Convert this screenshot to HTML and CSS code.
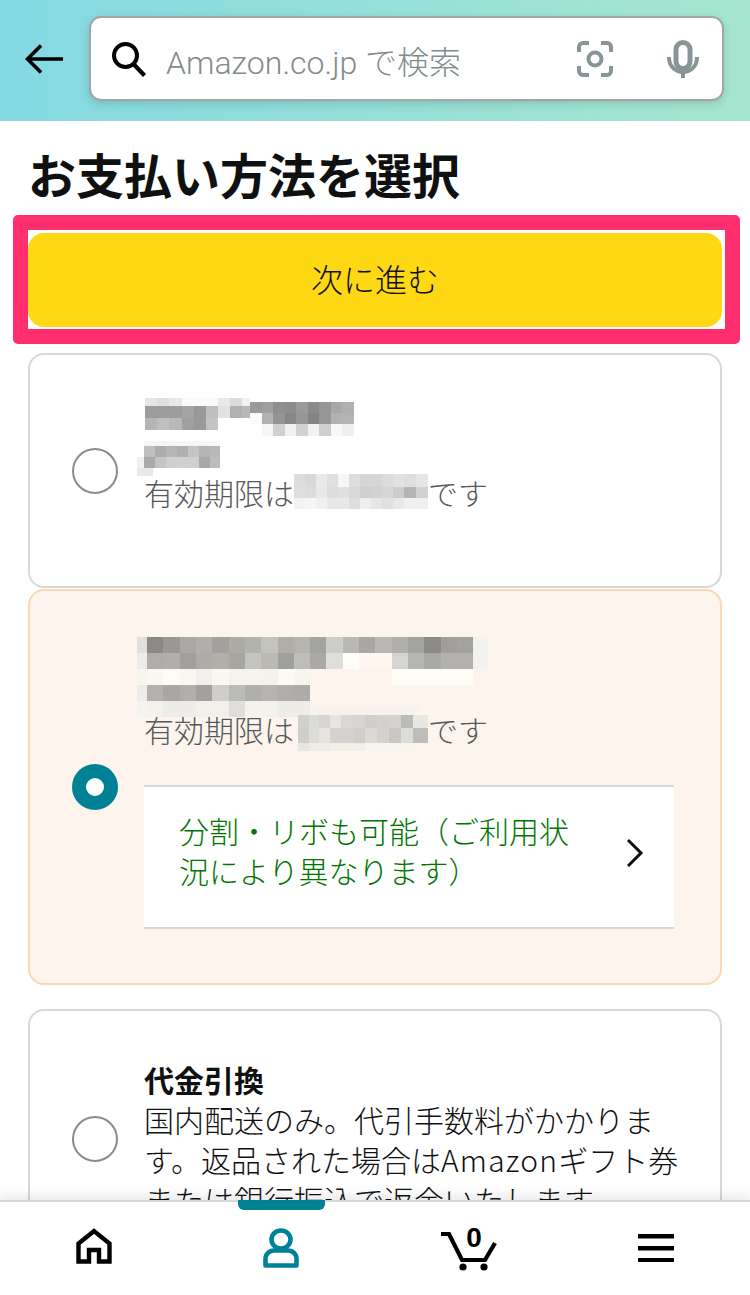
FILE: index.html
```html
<!DOCTYPE html>
<html lang="ja">
<head>
<meta charset="UTF-8">
<meta name="viewport" content="width=device-width, initial-scale=1.0">
<title>お支払い方法を選択</title>
<link rel="stylesheet" href="styles.css">
</head>
<body>
  <div class="page">
    <div class="top-bar">
      <svg class="back-icon" width="38" height="30" viewBox="0 0 38 30"><path d="M38 15H3M16 1.5L2.5 15 16 28.5" fill="none" stroke="#000" stroke-width="3.6"/></svg>
      <div class="search-box">
        <svg class="search-icon" width="36" height="36" viewBox="0 0 36 36"><circle cx="14.5" cy="14.5" r="11.5" fill="none" stroke="#000" stroke-width="4"/><path d="M22.5 23l11 11.5" stroke="#000" stroke-width="4.2"/></svg>
        <span class="search-text">Amazon.co.jp で検索</span>
        <svg class="camera-icon" width="36" height="36" viewBox="0 0 36 36" fill="none" stroke="#879596" stroke-width="4"><path d="M2 11V6a4 4 0 0 1 4-4h6M24 2h6a4 4 0 0 1 4 4v5M34 25v5a4 4 0 0 1-4 4h-6M12 34H6a4 4 0 0 1-4-4v-5"/><circle cx="18" cy="18" r="6.5"/></svg>
        <svg class="mic-icon" width="32" height="38" viewBox="0 0 32 38" fill="none"><rect x="9" y="2.500" width="14" height="26" rx="7" stroke="#879596" stroke-width="5"/><path d="M2 17v1a14 14 0 0 0 28 0v-1" stroke="#879596" stroke-width="4"/><path d="M16 32v6" stroke="#879596" stroke-width="4"/></svg>
      </div>
    </div>

    <h1 class="page-title">お支払い方法を選択</h1>

    <div class="highlight-box">
      <button class="next-btn">次に進む</button>
    </div>

    <div class="card card-first">
      <span class="radio"></span>
      <div class="card-body">
        <svg class="mosaic-name" width="220" height="78" viewBox="136 398 220 78" shape-rendering="crispEdges">
          <rect x="145" y="398" width="12" height="8" fill="#e6e6e6"/><rect x="157" y="398" width="12" height="8" fill="#e0e0e0"/><rect x="169" y="398" width="13" height="8" fill="#e8e8e8"/><rect x="182" y="398" width="36" height="8" fill="#fafafa"/>
          <rect x="145" y="406" width="12" height="12" fill="#9c9c9c"/><rect x="157" y="406" width="12" height="12" fill="#9c9c9c"/><rect x="169" y="406" width="13" height="12" fill="#9c9c9c"/><rect x="182" y="406" width="12" height="12" fill="#a4a4a4"/><rect x="194" y="406" width="12" height="12" fill="#999"/><rect x="206" y="406" width="12" height="12" fill="#bfbfbf"/>
          <rect x="145" y="418" width="12" height="12" fill="#b4b4b4"/><rect x="157" y="418" width="12" height="12" fill="#c0c0c0"/><rect x="169" y="418" width="13" height="12" fill="#b8b8b8"/><rect x="182" y="418" width="12" height="12" fill="#a0a0a0"/><rect x="194" y="418" width="12" height="12" fill="#9a9a9a"/><rect x="206" y="418" width="12" height="12" fill="#c4c4c4"/>
          <rect x="218" y="398" width="12" height="8" fill="#e8e8e8"/><rect x="230" y="398" width="12" height="8" fill="#dcdcdc"/><rect x="242" y="398" width="8" height="8" fill="#f0f0f0"/>
          <rect x="218" y="406" width="12" height="12" fill="#e2e2e2"/><rect x="230" y="406" width="12" height="12" fill="#b0b0b0"/><rect x="242" y="406" width="8" height="12" fill="#b8b8b8"/>
          <rect x="250" y="402" width="12" height="11" fill="#9a9a9a"/><rect x="262" y="402" width="11" height="11" fill="#a0a0a0"/><rect x="273" y="402" width="12" height="11" fill="#8f8f8f"/><rect x="285" y="402" width="11" height="11" fill="#8c8c8c"/><rect x="296" y="402" width="12" height="11" fill="#9a9a9a"/><rect x="308" y="402" width="11" height="11" fill="#8a8a8a"/><rect x="319" y="402" width="12" height="11" fill="#969696"/><rect x="331" y="402" width="11" height="11" fill="#a8a8a8"/><rect x="342" y="402" width="12" height="11" fill="#b0b0b0"/>
          <rect x="250" y="413" width="12" height="11" fill="#fafafa"/><rect x="262" y="413" width="11" height="11" fill="#b2b2b2"/><rect x="273" y="413" width="12" height="11" fill="#949494"/><rect x="285" y="413" width="11" height="11" fill="#868686"/><rect x="296" y="413" width="12" height="11" fill="#969696"/><rect x="308" y="413" width="11" height="11" fill="#848484"/><rect x="319" y="413" width="12" height="11" fill="#969696"/><rect x="331" y="413" width="11" height="11" fill="#b2b2b2"/><rect x="342" y="413" width="12" height="11" fill="#b4b4b4"/>
          <rect x="262" y="424" width="11" height="12" fill="#f6f6f6"/><rect x="273" y="424" width="12" height="12" fill="#d0d0d0"/><rect x="285" y="424" width="11" height="12" fill="#f0f0f0"/><rect x="296" y="424" width="12" height="12" fill="#d2d2d2"/><rect x="308" y="424" width="11" height="12" fill="#f2f2f2"/><rect x="319" y="424" width="12" height="12" fill="#cfcfcf"/><rect x="331" y="424" width="11" height="12" fill="#f8f8f8"/><rect x="342" y="424" width="12" height="12" fill="#efefef"/>
          <rect x="144" y="441" width="76" height="5" fill="#f6f6f6"/>
          <rect x="144" y="446" width="11" height="11" fill="#bfbfbf"/><rect x="155" y="446" width="11" height="11" fill="#adadad"/><rect x="166" y="446" width="11" height="11" fill="#b6b6b6"/><rect x="177" y="446" width="11" height="11" fill="#b0b0b0"/><rect x="188" y="446" width="11" height="11" fill="#c4c4c4"/><rect x="199" y="446" width="11" height="11" fill="#b4b4b4"/><rect x="210" y="446" width="10" height="11" fill="#b8b8b8"/>
          <rect x="137" y="457" width="7" height="11" fill="#f0f0f0"/><rect x="144" y="457" width="11" height="11" fill="#aaa"/><rect x="155" y="457" width="11" height="11" fill="#c4c4c4"/><rect x="166" y="457" width="11" height="11" fill="#cfcfcf"/><rect x="177" y="457" width="11" height="11" fill="#d0d0d0"/><rect x="188" y="457" width="11" height="11" fill="#cfcfcf"/><rect x="199" y="457" width="11" height="11" fill="#a8a8a8"/><rect x="210" y="457" width="10" height="11" fill="#bdbdbd"/>
          <rect x="137" y="468" width="16" height="8" fill="#e8e8e8"/>
        </svg>
        <div class="expiry-line">
          <span>有効期限は</span>
          <svg class="mosaic-date" width="134" height="36" viewBox="294 477 134 36" shape-rendering="crispEdges">
            <rect x="294" y="477" width="11" height="13" fill="#dcdcdc"/><rect x="305" y="477" width="11" height="13" fill="#d8d8d8"/><rect x="316" y="477" width="11" height="13" fill="#eaeaea"/><rect x="327" y="477" width="11" height="13" fill="#e0e0e0"/><rect x="338" y="477" width="11" height="13" fill="#f6f6f6"/><rect x="349" y="477" width="11" height="13" fill="#dedede"/><rect x="360" y="477" width="11" height="13" fill="#d6d6d6"/><rect x="371" y="477" width="11" height="13" fill="#d6d6d6"/><rect x="382" y="477" width="11" height="13" fill="#dcdcdc"/><rect x="393" y="477" width="11" height="13" fill="#e2e2e2"/><rect x="404" y="477" width="12" height="13" fill="#dedede"/><rect x="416" y="477" width="12" height="13" fill="#e6e6e6"/>
            <rect x="294" y="490" width="11" height="11" fill="#dfdfdf"/><rect x="305" y="490" width="11" height="11" fill="#dcdcdc"/><rect x="316" y="490" width="11" height="11" fill="#e8e8e8"/><rect x="327" y="490" width="11" height="11" fill="#dcdcdc"/><rect x="338" y="490" width="11" height="11" fill="#e0e0e0"/><rect x="349" y="490" width="11" height="11" fill="#d8d8d8"/><rect x="360" y="490" width="11" height="11" fill="#d0d0d0"/><rect x="371" y="490" width="11" height="11" fill="#d2d2d2"/><rect x="382" y="490" width="11" height="11" fill="#d6d6d6"/><rect x="393" y="490" width="11" height="11" fill="#cccccc"/><rect x="404" y="490" width="12" height="11" fill="#b4b4b4"/><rect x="416" y="490" width="12" height="11" fill="#d2d2d2"/>
            <rect x="294" y="501" width="11" height="11" fill="#f2f2f2"/><rect x="305" y="501" width="11" height="11" fill="#f6f6f6"/><rect x="316" y="501" width="11" height="11" fill="#f0f0f0"/><rect x="327" y="501" width="11" height="11" fill="#e8e8e8"/><rect x="338" y="501" width="11" height="11" fill="#e8e8e8"/><rect x="349" y="501" width="11" height="11" fill="#dedede"/><rect x="360" y="501" width="11" height="11" fill="#eeeeee"/><rect x="371" y="501" width="11" height="11" fill="#e6e6e6"/><rect x="382" y="501" width="11" height="11" fill="#e0e0e0"/><rect x="393" y="501" width="11" height="11" fill="#e8e8e8"/><rect x="404" y="501" width="12" height="11" fill="#f0f0f0"/><rect x="416" y="501" width="12" height="11" fill="#f0f0f0"/>
          </svg>
          <span>です</span>
        </div>
      </div>
    </div>

    <div class="card card-selected">
      <span class="radio radio-on"></span>
      <div class="card-body">
        <svg class="mosaic-bank" width="352" height="80" viewBox="137 637 352 80" shape-rendering="crispEdges">
          <rect x="137" y="637" width="10" height="16" fill="#e0e0dc"/><rect x="147" y="637" width="16" height="16" fill="#8a8986"/><rect x="163" y="637" width="17" height="16" fill="#999895"/><rect x="180" y="637" width="16" height="16" fill="#aaa8a4"/><rect x="196" y="637" width="16" height="16" fill="#b0afab"/><rect x="212" y="637" width="17" height="16" fill="#a2a19e"/><rect x="229" y="637" width="16" height="16" fill="#acaba6"/><rect x="245" y="637" width="16" height="16" fill="#b3b3ae"/><rect x="261" y="637" width="17" height="16" fill="#c3c2bd"/><rect x="278" y="637" width="16" height="16" fill="#afaea9"/><rect x="294" y="637" width="16" height="16" fill="#b5b4af"/><rect x="310" y="637" width="16" height="16" fill="#a4a4a0"/><rect x="326" y="637" width="17" height="16" fill="#cdcdc9"/><rect x="343" y="637" width="16" height="16" fill="#b9b8b4"/><rect x="359" y="637" width="16" height="16" fill="#a9a7a3"/><rect x="375" y="637" width="17" height="16" fill="#b9b8b4"/><rect x="392" y="637" width="16" height="16" fill="#b1afab"/><rect x="408" y="637" width="16" height="16" fill="#a3a3a0"/><rect x="424" y="637" width="17" height="16" fill="#8b8a87"/><rect x="441" y="637" width="16" height="16" fill="#a09f9b"/><rect x="457" y="637" width="16" height="16" fill="#a3a29f"/><rect x="473" y="637" width="15" height="16" fill="#f3f3ee"/>
          <rect x="137" y="653" width="10" height="16" fill="#ecece8"/><rect x="147" y="653" width="16" height="16" fill="#aeada9"/><rect x="163" y="653" width="17" height="16" fill="#b0afab"/><rect x="180" y="653" width="16" height="16" fill="#a1a09d"/><rect x="196" y="653" width="16" height="16" fill="#adaca8"/><rect x="212" y="653" width="17" height="16" fill="#b0afaa"/><rect x="229" y="653" width="16" height="16" fill="#a7a6a2"/><rect x="245" y="653" width="16" height="16" fill="#c4c4c0"/><rect x="261" y="653" width="17" height="16" fill="#bab9b4"/><rect x="278" y="653" width="16" height="16" fill="#9f9f9b"/><rect x="294" y="653" width="16" height="16" fill="#bfbdb9"/><rect x="310" y="653" width="16" height="16" fill="#a9a9a5"/><rect x="326" y="653" width="17" height="16" fill="#dfdeda"/><rect x="343" y="653" width="16" height="16" fill="#fffdf8"/><rect x="359" y="653" width="33" height="16" fill="#fdf7f0"/><rect x="392" y="653" width="16" height="16" fill="#d5d4d0"/><rect x="408" y="653" width="16" height="16" fill="#b5b5b1"/><rect x="424" y="653" width="17" height="16" fill="#a9a9a5"/><rect x="441" y="653" width="16" height="16" fill="#b2b1ad"/><rect x="457" y="653" width="16" height="16" fill="#b1b0ac"/><rect x="473" y="653" width="15" height="16" fill="#f2f2ee"/>
          <rect x="137" y="669" width="10" height="16" fill="#f8f4ee"/><rect x="147" y="669" width="16" height="16" fill="#fbf7f0"/><rect x="163" y="669" width="17" height="16" fill="#fefbf4"/><rect x="180" y="669" width="16" height="16" fill="#fbf7f0"/><rect x="196" y="669" width="16" height="16" fill="#f1f0ec"/><rect x="212" y="669" width="17" height="16" fill="#faf7f1"/><rect x="229" y="669" width="32" height="16" fill="#f6f3ed"/><rect x="261" y="669" width="17" height="16" fill="#f5f2ec"/><rect x="278" y="669" width="16" height="16" fill="#fcfaf4"/><rect x="294" y="669" width="16" height="16" fill="#f8f4ee"/><rect x="392" y="669" width="81" height="16" fill="#fffcf5"/>
          <rect x="137" y="685" width="10" height="16" fill="#ecece8"/><rect x="147" y="685" width="16" height="16" fill="#b2b1ad"/><rect x="163" y="685" width="17" height="16" fill="#a8a7a3"/><rect x="180" y="685" width="16" height="16" fill="#b0afab"/><rect x="196" y="685" width="16" height="16" fill="#a2a19d"/><rect x="212" y="685" width="17" height="16" fill="#cfcecb"/><rect x="229" y="685" width="16" height="16" fill="#bababa"/><rect x="245" y="685" width="16" height="16" fill="#b0afab"/><rect x="261" y="685" width="17" height="16" fill="#b5b4b0"/><rect x="278" y="685" width="16" height="16" fill="#afaeaa"/><rect x="294" y="685" width="16" height="16" fill="#adaca8"/>
          <rect x="137" y="701" width="10" height="16" fill="#f5f3ee"/><rect x="147" y="701" width="16" height="16" fill="#f3f1ec"/><rect x="163" y="701" width="33" height="16" fill="#eeece8"/><rect x="196" y="701" width="33" height="16" fill="#f2f0eb"/><rect x="229" y="701" width="16" height="16" fill="#dfdeda"/><rect x="245" y="701" width="33" height="16" fill="#f4f2ec"/><rect x="278" y="701" width="32" height="16" fill="#eeece7"/>
        </svg>
        <div class="expiry-line">
          <span>有効期限は</span>
          <svg class="mosaic-date" width="134" height="44" viewBox="294 709 134 44" shape-rendering="crispEdges">
            <rect x="310" y="709" width="108" height="8" fill="#f8f2ec"/>
            <rect x="298" y="717" width="11" height="13" fill="#d0d0cc"/><rect x="309" y="717" width="10" height="13" fill="#dcdad6"/><rect x="319" y="717" width="11" height="13" fill="#d6d4d0"/><rect x="330" y="717" width="11" height="13" fill="#e6e5e1"/><rect x="341" y="717" width="12" height="13" fill="#d8d7d3"/><rect x="353" y="717" width="12" height="13" fill="#d6d5d1"/><rect x="365" y="717" width="12" height="13" fill="#cfcec9"/><rect x="377" y="717" width="12" height="13" fill="#d2d1cd"/><rect x="389" y="717" width="12" height="13" fill="#d4d3ce"/><rect x="401" y="717" width="12" height="13" fill="#bbbbb7"/><rect x="413" y="717" width="15" height="13" fill="#e8e7e2"/>
            <rect x="298" y="730" width="11" height="15" fill="#cfcec9"/><rect x="309" y="730" width="10" height="15" fill="#dedcd8"/><rect x="319" y="730" width="11" height="15" fill="#e6e4df"/><rect x="330" y="730" width="11" height="15" fill="#d4d3cf"/><rect x="341" y="730" width="12" height="15" fill="#d4d3cf"/><rect x="353" y="730" width="12" height="15" fill="#d0cfca"/><rect x="365" y="730" width="12" height="15" fill="#dad9d5"/><rect x="377" y="730" width="12" height="15" fill="#d3d2cd"/><rect x="389" y="730" width="12" height="15" fill="#c8c7c3"/><rect x="401" y="730" width="12" height="15" fill="#dedcd8"/><rect x="413" y="730" width="15" height="15" fill="#bebdb9"/>
            <rect x="298" y="745" width="11" height="8" fill="#e8e6e1"/><rect x="309" y="745" width="21" height="8" fill="#eeece6"/><rect x="330" y="745" width="35" height="8" fill="#f2efe9"/><rect x="365" y="745" width="48" height="8" fill="#f8f4ee"/>
          </svg>
          <span>です</span>
        </div>
        <div class="plan-row">
          <span class="plan-text">分割・リボも可能（ご利用状況により異なります）</span>
          <svg class="chevron" width="18" height="30" viewBox="0 0 18 30"><path d="M2 2l13 13L2 28" fill="none" stroke="#0f1111" stroke-width="3"/></svg>
        </div>
      </div>
    </div>

    <div class="card card-cod">
      <span class="radio"></span>
      <div class="card-body card-text">
        <b>代金引換</b><br>
        国内配送のみ。代引手数料がかかりま<br>
        す。返品された場合は<span class="latin">Amazon</span>ギフト券<br>
        または銀行振込で返金いたします。
      </div>
    </div>

    <div class="bottom-nav">
      <div class="nav-item">
        <svg width="36" height="36" viewBox="0 0 36 36"><path d="M2.500 33.500V15.500L18 3l15.500 12.500v18H23V22H13v11.500z" fill="none" stroke="#000" stroke-width="4.400"/></svg>
      </div>
      <div class="nav-item">
        <span class="nav-marker"></span>
        <svg width="36" height="40" viewBox="0 0 36 40" fill="none" stroke="#008296" stroke-width="4.600"><ellipse cx="18" cy="11.500" rx="9.500" ry="9"/><path d="M2.500 37.500V31a8.500 8.500 0 0 1 8.500-8.500h14a8.500 8.500 0 0 1 8.500 8.500v6.500z" stroke-linejoin="round"/></svg>
      </div>
      <div class="nav-item">
        <svg class="cart-icon" width="56" height="54" viewBox="0 -8 56 54"><path d="M0 8h8l13 26h23l10-17" fill="none" stroke="#000" stroke-width="4.200"/><circle cx="22" cy="41" r="3.600"/><circle cx="43" cy="41" r="3.600"/><text class="cart-count" x="33" y="21" text-anchor="middle">0</text></svg>
      </div>
      <div class="nav-item">
        <svg class="menu-icon" width="36" height="28" viewBox="0 0 36 28"><rect width="36" height="4.500"/><rect y="12" width="36" height="4.500"/><rect y="24" width="36" height="4.500"/></svg>
      </div>
    </div>
  </div>
</body>
</html>
```

FILE: styles.css
```css
body {
  margin: 0;
  font-family: "Noto Sans CJK JP", "Noto Sans", sans-serif;
  color: #0f1111;
  background: #fff;
}
.page {
  position: relative;
  width: 750px;
  height: 1295px;
  overflow: hidden;
}
svg {
  display: block;
  flex-shrink: 0;
}

/* header */
.top-bar {
  height: 121px;
  box-sizing: border-box;
  padding: 16px 26px 20px 25px;
  display: flex;
  align-items: center;
  background: linear-gradient(90deg, #84d9e3, #a6e6cf);
}
.back-icon {
  margin-right: 26px;
}
.search-box {
  flex: 1;
  height: 85px;
  box-sizing: border-box;
  padding-left: 20px;
  display: flex;
  align-items: center;
  background: #fff;
  border: 2px solid #a2a6a6;
  border-radius: 12px;
  box-shadow: 0 3px 8px rgba(15, 17, 17, 0.15);
}
.search-text {
  margin-left: 19px;
  padding-top: 3px;
  width: 391px;
  font-family: Roboto, "Noto Sans CJK JP", sans-serif;
  font-size: 32px;
  font-weight: 300;
  color: #828c8c;
  white-space: nowrap;
}
.camera-icon {
  margin-left: 20px;
}
.mic-icon {
  margin-left: 54px;
}

.page-title {
  margin: 0;
  padding: 18px 0 0 28px;
  height: 94px;
  box-sizing: border-box;
  font-size: 48px;
  line-height: 68px;
  font-weight: 700;
}

/* pink frame round the button */
.highlight-box {
  width: 727px;
  margin-left: 13px;
  box-sizing: border-box;
  border: 15px solid #ff2e6c;
  border-radius: 5px;
  background: #fff;
  padding: 3px 3px 2px 0;
}
.next-btn {
  display: block;
  width: 100%;
  height: 94px;
  padding: 0 0 4px;
  border: none;
  border-radius: 16px;
  background: #ffd814;
  color: #0f1111;
  font-family: inherit;
  font-size: 32px;
  font-weight: 300;
}

/* payment cards */
.card {
  width: 694px;
  margin-left: 28px;
  box-sizing: border-box;
  display: flex;
  align-items: center;
  gap: 26px;
  padding-left: 42px;
  border: 2px solid #d5d9d9;
  border-radius: 16px;
  background: #fff;
  font-size: 30px;
  font-weight: 300;
  line-height: 40px;
  color: #565959;
}
.card-first {
  margin-top: 9px;
  height: 235px;
}
.card-first .card-body {
  padding-bottom: 31px;
}
.card-selected {
  margin-top: 1px;
  height: 396px;
  background: #fcf4ed;
  border-color: #fbd8b4;
}
.card-selected .card-body {
  padding-bottom: 8px;
}
.card-cod {
  margin-top: 24px;
  height: 260px;
}
.radio {
  width: 46px;
  height: 46px;
  box-sizing: border-box;
  flex-shrink: 0;
  border: 2px solid #888c8c;
  border-radius: 50%;
  background: #fff;
}
.radio-on {
  border: 14px solid #008296;
}
.card-body {
  flex: 1;
}
.card-text {
  color: #0f1111;
  white-space: nowrap;
}
.card-text b {
  font-weight: 700;
}
.latin {
  letter-spacing: 1.2px;
}
.mosaic-name {
  margin: 0 0 -4px -8px;
}
.mosaic-bank {
  margin: 0 0 -8px -7px;
}
.expiry-line {
  height: 40px;
  display: flex;
  align-items: center;
}
.plan-row {
  width: 530px;
  height: 144px;
  margin-top: 36px;
  box-sizing: border-box;
  padding: 23px 30px 37px 35px;
  display: flex;
  justify-content: space-between;
  align-items: center;
  background: #fff;
  border-top: 2px solid #d5d9d9;
  border-bottom: 2px solid #d5d9d9;
  color: #007600;
}
.plan-text {
  width: 400px;
}
.chevron {
  margin-top: 6px;
}

/* bottom navigation */
.bottom-nav {
  position: absolute;
  left: 0;
  right: 0;
  bottom: 0;
  height: 95px;
  box-sizing: border-box;
  display: grid;
  grid-template-columns: repeat(4, 1fr);
  background: #fff;
  border-top: 2px solid #d1dada;
  box-shadow: 0 -6px 10px rgba(15, 17, 17, 0.08);
}
.nav-item {
  position: relative;
  display: flex;
  justify-content: center;
  align-items: flex-start;
  padding-top: 26px;
}
.cart-icon {
  margin-top: -10px;
}
.menu-icon {
  margin-top: 6px;
}
.cart-count {
  font-family: "Liberation Sans", Arial, sans-serif;
  font-size: 28px;
  font-weight: 700;
}
.nav-marker {
  position: absolute;
  top: -2px;
  left: 50px;
  width: 87px;
  height: 10px;
  border-radius: 0 0 6px 6px;
  background: #008296;
}
```
